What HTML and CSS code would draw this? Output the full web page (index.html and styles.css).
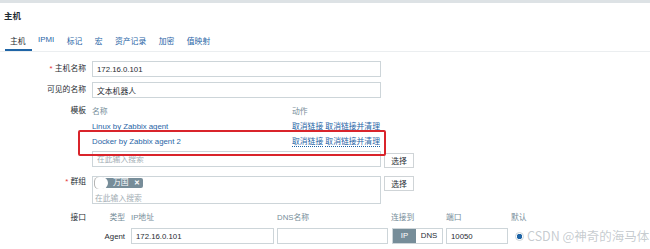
FILE: index.html
```html
<!DOCTYPE html>
<html lang="zh">
<head>
  <meta charset="UTF-8" />
  <title>主机</title>
  <link rel="stylesheet" href="styles.css">
</head>
<body>
  <div class="topbar"></div>
  <h1 class="title">主机</h1>

  <nav class="tabs">
    <a class="active">主机</a>
    <a>IPMI</a>
    <a>标记</a>
    <a>宏</a>
    <a>资产记录</a>
    <a>加密</a>
    <a>值映射</a>
  </nav>

  <div class="form">
    <div class="row">
      <label class="req">主机名称</label>
      <div class="field"><input class="text wide" value="172.16.0.101"></div>
    </div>

    <div class="row">
      <label>可见的名称</label>
      <div class="field"><input class="text wide" value="文本机器人"></div>
    </div>

    <div class="row row-tpl">
      <label>模板</label>
      <div class="field">
        <div class="templates">
          <div class="tpl-head">
            <span class="col-name">名称</span>
            <span>动作</span>
          </div>
          <div class="tpl-row">
            <a class="col-name link">Linux by Zabbix agent</a>
            <span class="actions"><a class="link">取消链接</a> <a class="link">取消链接并清理</a></span>
          </div>
          <div class="tpl-row">
            <a class="col-name link">Docker by Zabbix agent 2</a>
            <span class="actions"><a class="link">取消链接</a> <a class="link">取消链接并清理</a></span>
          </div>
          <div class="highlight"></div>
        </div>
        <div class="with-btn">
          <input class="text wide" placeholder="在此输入搜索">
          <button class="btn">选择</button>
        </div>
      </div>
    </div>

    <div class="row row-group">
      <label class="req">群组</label>
      <div class="field with-btn">
        <div class="multiselect">
          <span class="tag">万国 <b>✕</b></span>
          <span class="placeholder">在此输入搜索</span>
        </div>
        <button class="btn">选择</button>
      </div>
    </div>

    <div class="row row-iface">
      <label>接口</label>
      <div class="field">
        <div class="iface iface-head">
          <span class="type">类型</span>
          <span>IP地址</span>
          <span>DNS名称</span>
          <span>连接到</span>
          <span>端口</span>
          <span>默认</span>
        </div>
        <div class="iface">
          <span class="type">Agent</span>
          <input class="text" value="172.16.0.101">
          <input class="text">
          <div class="toggle"><span class="on">IP</span><span>DNS</span></div>
          <input class="text" value="10050">
          <span class="radio"></span>
        </div>
      </div>
    </div>
  </div>

  <div class="watermark">CSDN @神奇的海马体</div>
</body>
</html>
```

FILE: styles.css
```css
* {
  margin: 0;
  padding: 0;
  box-sizing: border-box;
}

body {
  font-family: "Liberation Sans", "Noto Sans CJK SC", sans-serif;
  font-size: 7.8px;
  color: #1f2c33;
  background: #fff;
  position: relative;
  overflow: hidden;
}

.topbar {
  height: 3px;
  background: #dde2e5;
}

.title {
  font-size: 8.5px;
  font-weight: bold;
  padding: 6px 0 0 4px;
  height: 29px;
}

.tabs {
  display: flex;
  gap: 12.5px;
  padding-left: 5px;
  border-bottom: 1px solid #ebeef0;
}

.tabs a {
  color: #1f65a6;
  padding: 3px 0;
  border-bottom: 2px solid transparent;
}

.tabs a.active {
  color: #1f2c33;
  border-bottom-color: #1f65a6;
  padding: 3px 6px 3px 5px;
  margin-right: -6px;
}

.form {
  padding-top: 9px;
}

.row {
  display: flex;
  gap: 6px;
  margin-bottom: 5px;
}

.row > label {
  width: 86px;
  text-align: right;
  line-height: 16px;
  flex-shrink: 0;
}

.row-tpl {
  margin-bottom: 8px;
}

.row-group > label {
  line-height: 12px;
}

.row-iface > label {
  line-height: 17px;
}

.req::before {
  content: "* ";
  color: #e33734;
}

.text {
  height: 16px;
  border: 1px solid #cdd5d9;
  font: inherit;
  color: #1f2c33;
  padding: 0 4px;
  background: #fff;
}

.text::placeholder {
  color: #a3aeb4;
}

.wide {
  width: 289px;
}

.templates {
  position: relative;
  width: 289px;
}

.tpl-head, .tpl-row {
  display: flex;
  height: 15px;
  line-height: 15px;
}

.tpl-head {
  color: #768d99;
  height: 16px;
  line-height: 17px;
}

.col-name {
  width: 200px;
}

.link {
  color: #1f65a6;
}

.actions .link {
  border-bottom: 1px dotted #1f65a6;
}

.highlight {
  position: absolute;
  left: -14px;
  top: 27px;
  width: 308px;
  height: 26px;
  border: 2px solid #d9242b;
  border-radius: 2px;
}

.with-btn {
  display: flex;
  gap: 3px;
  align-items: flex-start;
}

.templates + .with-btn {
  margin-top: 2px;
}

.btn {
  font: inherit;
  height: 15px;
  width: 30px;
  margin-top: 2px;
  background: #fff;
  border: 1px solid #cfd4d7;
  color: #1f2c33;
}

.row .multiselect + .btn {
  margin-top: 0;
}

.multiselect {
  width: 289px;
  height: 28px;
  border: 1px solid #cdd5d9;
  padding: 1px 2px;
  display: flex;
  flex-direction: column;
  align-items: flex-start;
}

.tag {
  position: relative;
  background: #778d99;
  color: #fff;
  padding: 0 3px 0 18px;
  line-height: 10px;
  border-radius: 2px;
}

.tag::before {
  content: "";
  position: absolute;
  left: 0;
  top: -1px;
  width: 13px;
  height: 12px;
  background: #fff;
  border-radius: 6px 8px 8px 6px;
  box-shadow: -1px 0 0 #b5b5b5;
}

.tag b {
  font-size: 6.5px;
  margin-left: 3px;
}

.placeholder {
  color: #a3aeb4;
  margin-top: 4px;
}

.iface {
  display: grid;
  grid-template-columns: 36px 143px 111px 52px 62px auto;
  column-gap: 3px;
  align-items: center;
}

.iface-head {
  color: #768d99;
  height: 19px;
  align-items: start;
  line-height: 17px;
}

.iface .type {
  text-align: right;
  padding-right: 3px;
}

.iface .text {
  width: 100%;
}

.toggle {
  display: flex;
  height: 16px;
  border: 1px solid #cdd5d9;
  margin-left: 1px;
}

.toggle span {
  flex: 1;
  text-align: center;
  line-height: 14px;
}

.toggle .on {
  background: #768d99;
  color: #fff;
  flex: 0 0 23px;
}

.radio {
  width: 9px;
  height: 9px;
  border-radius: 50%;
  border: 1px solid #cdd5d9;
  background: radial-gradient(circle, #1f65a6 2.5px, #fff 3px);
  margin-left: 4px;
}

.watermark {
  position: absolute;
  left: 527px;
  top: 226px;
  font-family: "Noto Sans CJK SC", sans-serif;
  font-size: 12.5px;
  color: rgba(150, 160, 168, 0.55);
}
```
